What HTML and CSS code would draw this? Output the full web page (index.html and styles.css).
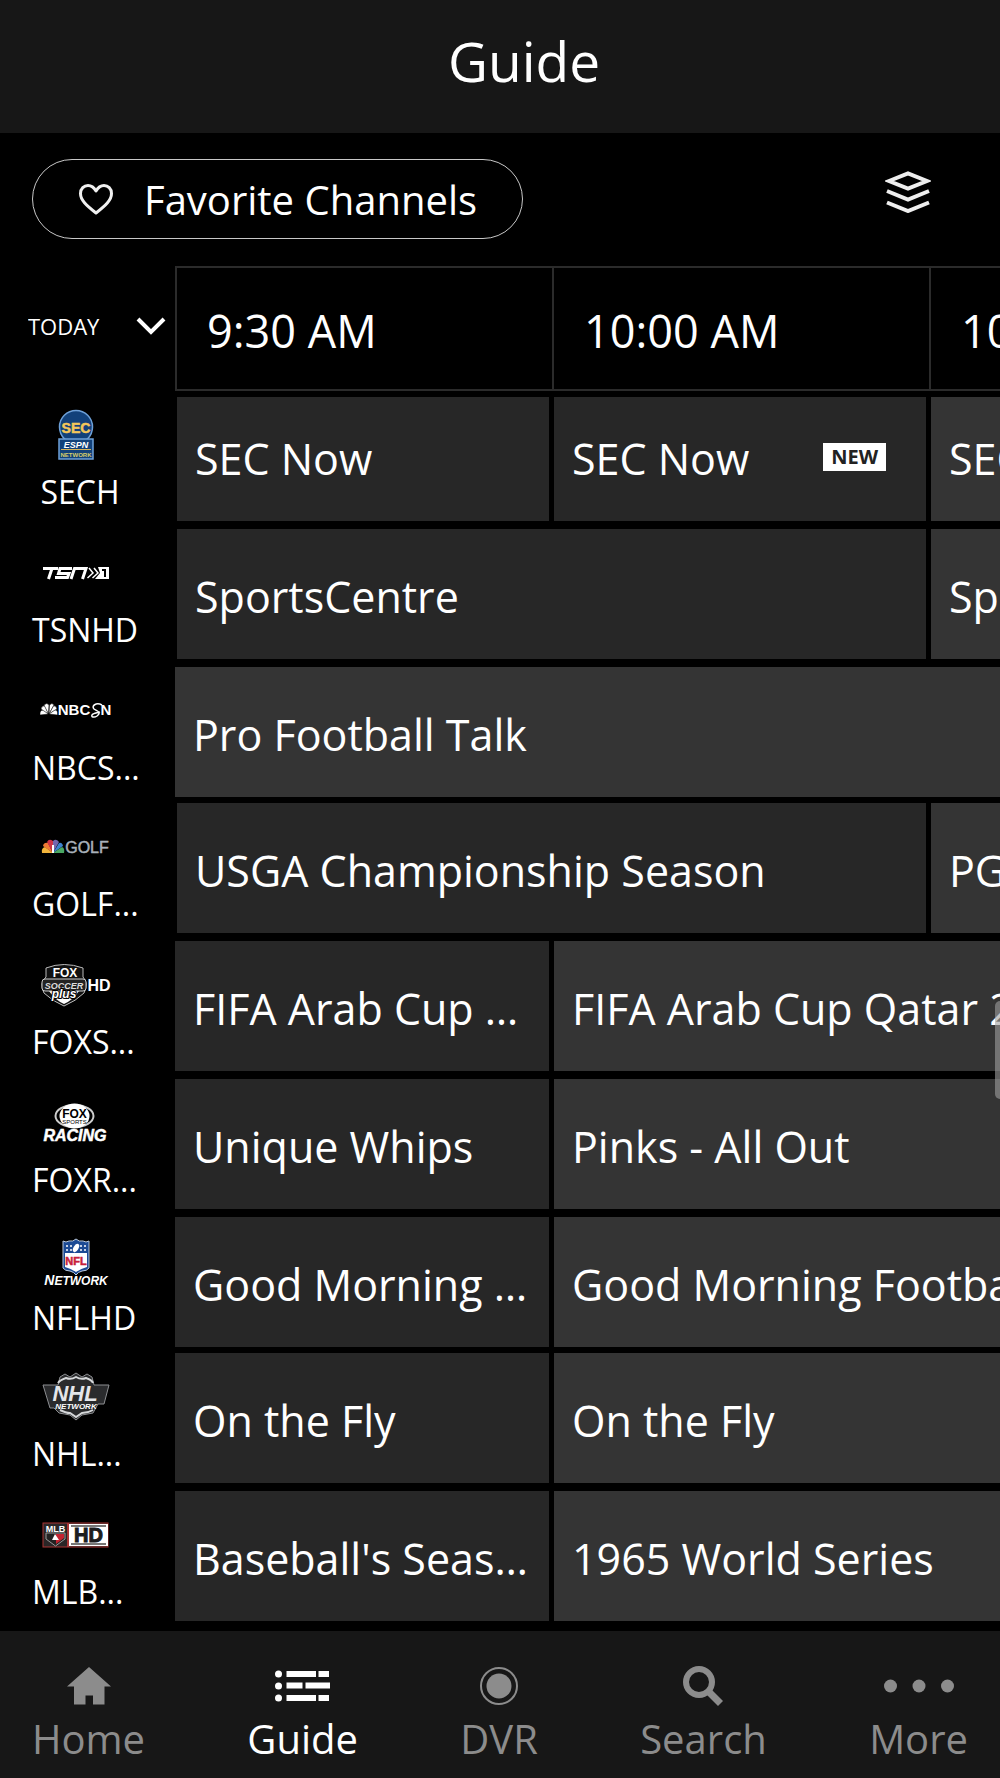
FILE: index.html
```html
<!DOCTYPE html>
<html lang="en">
  <head>
    <meta charset="UTF-8" />
    <meta name="viewport" content="width=device-width, initial-scale=1.0" />
    <title>Guide</title>
    <link rel="stylesheet" href="styles.css">
  </head>
  <body>
    <header class="header">
      <h1>Guide</h1>
    </header>

    <main>
      <div class="toolbar">
        <button class="filter-button" type="button">
          <svg width="36" height="34" viewBox="0 0 36 34" fill="none" stroke="#f0f0f0" stroke-width="3" stroke-linejoin="round">
            <path d="M18 31 C8 23 2.500 18 2.500 11.500 C2.500 6.500 6 3.500 10 3.500 C14 3.500 16 5.500 18 9 C20 5.500 22 3.500 26 3.500 C30 3.500 33.500 6.500 33.500 11.500 C33.500 18 28 23 18 31 Z" />
          </svg>
          Favorite Channels
        </button>
        <button class="layers-button" type="button" aria-label="Layers">
          <svg width="46" height="42" viewBox="0 0 46 42" fill="none" stroke="#eeeeee" stroke-width="4">
            <path d="M4 10 L23 2.500 L42 10 L23 17.500 Z" />
            <path d="M2 20 L23 28.500 L44 20" />
            <path d="M2 31.500 L23 40 L44 31.500" />
          </svg>
        </button>
      </div>

      <div class="guide">
        <table>
          <colgroup>
            <col class="col-channel" />
            <col class="col-slot" span="3" />
          </colgroup>
          <thead>
            <tr>
              <th class="day">
                <label class="day-picker">
                  <select aria-label="Day">
                    <option>TODAY</option>
                  </select>
                  <svg width="30" height="20" viewBox="0 0 30 20" fill="none" stroke="#ffffff" stroke-width="4">
                    <path d="M2 3 L15 16 L28 3" />
                  </svg>
                </label>
              </th>
              <th class="time" scope="col">9:30 AM</th>
              <th class="time" scope="col">10:00 AM</th>
              <th class="time" scope="col">10:30 AM</th>
            </tr>
          </thead>
          <tbody>
            <tr class="first">
              <th class="channel centered" scope="row">
                <svg class="logo" viewBox="0 0 72 52">
                  <circle cx="36" cy="18" r="16.500" fill="#12417a" stroke="#6da0d8" stroke-width="1.500" />
                  <rect x="19" y="30" width="34" height="20" fill="#12417a" stroke="#6da0d8" stroke-width="1.500" />
                  <text x="36" y="24" font-size="14" fill="#f3c75a" stroke="#f3c75a" stroke-width="0.500" class="logo-bold">SEC</text>
                  <text x="36" y="38.500" font-size="9" fill="#ffffff" class="logo-italic">ESPN</text>
                  <path d="M21 40.500 H51" stroke="#d6b35a" />
                  <text x="36" y="48" font-size="6" fill="#d8cf6a" class="logo-bold">NETWORK</text>
                </svg>
                <span>SECH</span>
              </th>
              <td><a class="program" href="#">SEC Now</a></td>
              <td><a class="program" href="#">SEC Now <span class="badge">NEW</span></a></td>
              <td><a class="program later" href="#">SEC Now</a></td>
            </tr>
            <tr>
              <th class="channel" scope="row">
                <svg class="logo" viewBox="0 0 72 52" fill="none" stroke="#ffffff" stroke-width="3">
                  <path d="M3 21.500 H18 M12 21.500 L8.500 32" />
                  <path d="M32 21.500 H20 L18.500 26.500 H29 L27.500 30.500 H15" />
                  <path d="M31 32 L34.500 21.500 H46 L42.500 32" />
                  <path d="M49 21 L53 26 L47.500 31 M54 21 L58 26 L52.500 31" stroke-width="1.500" />
                  <path d="M58 20 H69 V32 H55 L60 26 Z" fill="#ffffff" stroke="none" />
                  <path d="M62 23 H65 V30" stroke="#000000" stroke-width="2" />
                </svg>
                <span>TSNHD</span>
              </th>
              <td colspan="2"><a class="program" href="#">SportsCentre</a></td>
              <td><a class="program later" href="#">SportsCentre</a></td>
            </tr>
            <tr>
              <th class="channel" scope="row">
                <svg class="logo" viewBox="0 0 72 52" fill="#ffffff">
                  <g stroke="#000000" stroke-width="0.500">
                    <path d="M8.500 29 L0 30 Q-.5 25 3.500 25 Z" />
                    <path d="M8.500 29 L1 24 Q2 20 5 21 Z" />
                    <path d="M8.500 29 L4 20 Q7 17 9 20 Z" />
                    <path d="M9 29 L9.500 20 Q12 17 14 20 Z" />
                    <path d="M9 29 L13.500 21 Q16 20 17 24 Z" />
                    <path d="M9 29 L15 25 Q18 25 17.500 30 Z" />
                  </g>
                  <text x="34" y="29.500" font-size="15" class="logo-bold">NBC</text>
                  <text x="66" y="29.500" font-size="15" class="logo-bold">N</text>
                  <path d="M62 20 C56 17 51 21 54 24 C57 26 62 27 57 31 C54 33 51 32 52 30 C53 28 57 28 60 27" fill="none" stroke="#ffffff" stroke-width="1.500" />
                </svg>
                <span>NBCS...</span>
              </th>
              <td class="started" colspan="3"><a class="program later" href="#">Pro Football Talk</a></td>
            </tr>
            <tr class="tight">
              <th class="channel" scope="row">
                <svg class="logo" viewBox="0 0 72 52">
                  <path d="M13 32 L2 32 Q1 27 5 26 Z" fill="#f2b53c" />
                  <path d="M13 32 L3 25 Q4 21 8 22 Z" fill="#ef7a35" />
                  <path d="M13 32 L7 21 Q9 17 13 20 Z" fill="#cf3447" />
                  <path d="M13 32 L13 20 Q16 17 19 21 Z" fill="#7465ad" />
                  <path d="M13 32 L19 22 Q22 21 23 25 Z" fill="#3d83cf" />
                  <path d="M13 32 L22 26 Q25 27 24 32 Z" fill="#4aa764" />
                  <path d="M12 32 L12 24 L14 24 L14 32 Z" fill="#ffffff" />
                  <text x="47" y="31.500" font-size="16" fill="#a9b1ba" stroke="#a9b1ba" stroke-width="0.500" class="logo-text">GOLF</text>
                </svg>
                <span>GOLF...</span>
              </th>
              <td colspan="2"><a class="program" href="#">USGA Championship Season</a></td>
              <td><a class="program later" href="#">PGA Tour</a></td>
            </tr>
            <tr>
              <th class="channel" scope="row">
                <svg class="logo" viewBox="0 0 72 52">
                  <path d="M6 9 Q24 2 43 9 V18 Q49 24 44 34 Q36 42 24 47 Q12 42 4 34 Q-1 24 6 18 Z" fill="#111111" stroke="#bbbbbb" />
                  <path d="M9 32 H39 Q33 41 24 45 Q15 41 9 32 Z" fill="#ffffff" />
                  <rect x="2" y="20" width="44" height="12" rx="3" fill="#222222" stroke="#cccccc" />
                  <text x="25" y="18" font-size="12" fill="#ffffff" class="logo-bold">FOX</text>
                  <text x="24" y="29.500" font-size="9" fill="#dddddd" class="logo-italic">SOCCER</text>
                  <text x="24" y="39" font-size="12" fill="#ffffff" stroke="#000000" stroke-width="2" paint-order="stroke" class="logo-italic">plus</text>
                  <text x="59" y="32" font-size="16" fill="#ffffff" class="logo-bold">HD</text>
                </svg>
                <span>FOXS...</span>
              </th>
              <td class="started"><a class="program" href="#">FIFA Arab Cup Qatar 2021</a></td>
              <td colspan="2"><a class="program later" href="#">FIFA Arab Cup Qatar 2021</a></td>
            </tr>
            <tr>
              <th class="channel" scope="row">
                <svg class="logo" viewBox="0 0 72 52">
                  <ellipse cx="34.500" cy="19" rx="19" ry="11" fill="none" stroke="#cccccc" stroke-width="2" />
                  <ellipse cx="34.500" cy="19" rx="15" ry="12.500" fill="#ffffff" />
                  <text x="34.500" y="21" font-size="12" fill="#000000" class="logo-bold">FOX</text>
                  <text x="34.500" y="27" font-size="6" fill="#000000" class="logo-text">SPORTS</text>
                  <text x="35" y="44" font-size="16" fill="#ffffff" stroke="#ffffff" stroke-width="0.500" class="logo-italic">RACING</text>
                </svg>
                <span>FOXR...</span>
              </th>
              <td class="started"><a class="program" href="#">Unique Whips</a></td>
              <td colspan="2"><a class="program later" href="#">Pinks - All Out</a></td>
            </tr>
            <tr>
              <th class="channel" scope="row">
                <svg class="logo" viewBox="0 0 72 52">
                  <path d="M23 6 Q26 8 29 6 Q33 7 36 4 Q39 7 43 6 Q46 8 49 6 V33 Q47 36 42 36 Q38 37 36 40 Q34 37 30 36 Q25 36 23 33 Z" fill="#1c4a94" stroke="#b8c8dd" />
                  <path d="M25 18 H47 V32 Q40 34 36 37 Q32 34 25 32 Z" fill="#ffffff" />
                  <g fill="#ffffff">
                    <circle cx="27" cy="11" r="1" /><circle cx="31" cy="11" r="1" />
                    <circle cx="27" cy="15" r="1" /><circle cx="31" cy="15" r="1" />
                    <circle cx="41" cy="11" r="1" /><circle cx="45" cy="11" r="1" />
                    <circle cx="41" cy="15" r="1" /><circle cx="45" cy="15" r="1" />
                  </g>
                  <ellipse cx="36" cy="13" rx="2.500" ry="4.500" fill="#ffffff" transform="rotate(30 36 13)" />
                  <text x="36" y="30" font-size="11" fill="#c8203a" stroke="#c8203a" stroke-width="0.500" class="logo-bold">NFL</text>
                  <text x="36" y="50" font-size="14" fill="#ffffff" class="logo-italic">N<tspan font-size="12">ETWORK</tspan></text>
                </svg>
                <span>NFLHD</span>
              </th>
              <td class="started"><a class="program" href="#">Good Morning Football</a></td>
              <td colspan="2"><a class="program later" href="#">Good Morning Football</a></td>
            </tr>
            <tr class="tight">
              <th class="channel" scope="row">
                <svg class="logo" viewBox="0 0 72 52">
                  <path d="M20 6 L25 3 L30 6 L36 2 L42 6 L47 3 L52 6 L54 14 H69 L64 33 H58 L53 42 L42 44 L36 49 L30 44 L19 42 L14 37 H10 L3 14 H18 Z" fill="#2a2b2d" stroke="#8d8f92" />
                  <path d="M18 12 Q20 9 26 7 Q31 9 36 6 Q41 9 46 7 Q52 9 53 12" fill="none" stroke="#d5d7d9" stroke-width="2" />
                  <path d="M20 39 Q26 42 30 42 L36 46 L42 42 Q48 42 53 39" fill="none" stroke="#d5d7d9" stroke-width="2" />
                  <text x="35" y="30" font-size="22" fill="#e4e6ea" class="logo-italic">NHL</text>
                  <text x="36" y="38" font-size="8" fill="#ffffff" class="logo-italic">NETWORK</text>
                </svg>
                <span>NHL...</span>
              </th>
              <td class="started"><a class="program" href="#">On the Fly</a></td>
              <td colspan="2"><a class="program later" href="#">On the Fly</a></td>
            </tr>
            <tr>
              <th class="channel" scope="row">
                <svg class="logo" viewBox="0 0 72 52">
                  <rect x="3" y="14" width="65" height="24" fill="#2a2627" stroke="#a93434" />
                  <rect x="29" y="15" width="39" height="22" fill="#ffffff" />
                  <path d="M28 14 V38" stroke="#a93434" stroke-width="2" />
                  <path d="M31 17 H66 M31 35 H66" stroke="#777777" stroke-width="2" />
                  <path d="M6 24 H25 V30 L15.500 37 L6 30 Z" fill="#222222" stroke="#999999" />
                  <path d="M16 25 H24 V29 L16 35 Z" fill="#c42230" />
                  <path d="M12 31 L15 25 L19 31 Z" fill="#ffffff" />
                  <text x="15.500" y="23" font-size="9" fill="#ffffff" class="logo-bold">MLB</text>
                  <text x="48.500" y="33" font-size="20" fill="#1d1d1f" stroke="#1d1d1f" class="logo-bold">HD</text>
                </svg>
                <span>MLB...</span>
              </th>
              <td class="started"><a class="program" href="#">Baseball's Seasons</a></td>
              <td colspan="2"><a class="program later" href="#">1965 World Series</a></td>
            </tr>
          </tbody>
        </table>
      </div>
    </main>

    <div class="scroll-thumb"></div>

    <nav class="tabs">
      <a href="#">
        <svg width="44" height="42" viewBox="0 0 44 42" fill="currentColor">
          <path d="M22 2 L44 21.500 H37.500 V39.500 H26 V30.500 H18.500 V39.500 H7 V21.500 H0 Z" />
        </svg>
        Home
      </a>
      <a href="#" class="active">
        <svg width="55" height="42" viewBox="0 0 55 42" fill="currentColor">
          <circle cx="3.500" cy="9" r="3.500" />
          <circle cx="3.500" cy="21" r="3.500" />
          <circle cx="3.500" cy="33" r="3.500" />
          <path d="M11.500 6 H41 V12 H11.500 Z M43.500 6 H54 V12 H43.500 Z" />
          <path d="M11.500 17.500 H27.500 V23.500 H11.500 Z M30.500 17.500 H55 V23.500 H30.500 Z" />
          <path d="M11.500 30 H41 V36 H11.500 Z M43.500 30 H54 V36 H43.500 Z" />
        </svg>
        Guide
      </a>
      <a href="#">
        <svg width="42" height="42" viewBox="0 0 42 42" fill="currentColor">
          <circle cx="21" cy="21" r="18" fill="none" stroke="currentColor" stroke-width="2" />
          <circle cx="21" cy="21" r="12.500" />
        </svg>
        DVR
      </a>
      <a href="#">
        <svg width="42" height="42" viewBox="0 0 42 42" fill="none" stroke="currentColor">
          <circle cx="17" cy="17" r="13" stroke-width="6" />
          <path d="M26 26 L38.500 38.500" stroke-width="7" />
        </svg>
        Search
      </a>
      <a href="#">
        <svg width="70" height="42" viewBox="0 0 70 42" fill="currentColor">
          <circle cx="6.500" cy="21" r="6.500" />
          <circle cx="35" cy="21" r="6.500" />
          <circle cx="63.500" cy="21" r="6.500" />
        </svg>
        More
      </a>
    </nav>
  </body>
</html>
```
FILE: styles.css
```css
* {
  box-sizing: border-box;
}

body {
  margin: 0;
  background-color: #000000;
  color: #ffffff;
  font-family: "Open Sans", "Noto Sans", sans-serif;
  overflow-x: hidden;
}

button,
select {
  font-family: inherit;
  color: inherit;
  background: none;
  border: none;
  padding: 0;
}

a {
  color: inherit;
  text-decoration: none;
}

.header {
  height: 133px;
  padding: 0 0 12px 48px;
  background-color: #171717;
  display: flex;
  align-items: center;
  justify-content: center;
}

.header h1 {
  margin: 0;
  font-size: 55px;
  font-weight: 400;
}

/* Filter pill and layers icon */
.toolbar {
  height: 133px;
  padding: 26px 69px 0 32px;
  display: flex;
  justify-content: space-between;
  align-items: flex-start;
}

.filter-button {
  height: 80px;
  padding: 0 45px;
  border: 1px solid #c8c8c8;
  border-radius: 40px;
  display: flex;
  align-items: center;
  gap: 30px;
  font-size: 40px;
}

.layers-button {
  margin-top: 12px;
}

.layers-button svg {
  display: block;
}

/* Program grid */
.guide {
  overflow: hidden;
}

table {
  width: 1306px;
  min-width: 100%;
  table-layout: fixed;
  border-collapse: separate;
  border-spacing: 0;
}

.col-channel {
  width: 175px;
}

th,
td {
  padding: 0;
  font-weight: 400;
  text-align: left;
}

thead tr {
  height: 125px;
}

.day {
  vertical-align: top;
}

.day-picker {
  display: flex;
  align-items: center;
  padding: 44px 9px 0 28px;
  justify-content: space-between;
}

.day-picker select {
  appearance: none;
  font-size: 22px;
  line-height: 32px;
}

.time {
  height: 125px;
  padding: 4px 0 0 30px;
  border: 2px solid #2b2b2b;
  border-right: none;
  font-size: 45px;
}

tbody tr {
  height: 138px;
}

tbody .first {
  height: 130px;
}

tbody .tight {
  height: 136px;
}

td {
  padding: 8px 3px 0 2px;
  vertical-align: bottom;
}

.started {
  padding-left: 0;
}

.program {
  height: 130px;
  padding: 6px 18px 0;
  background-color: #272727;
  display: block;
  font-size: 43px;
  line-height: 124px;
  white-space: nowrap;
  overflow: hidden;
  text-overflow: ellipsis;
}

.later {
  background-color: #343434;
}

.first td {
  padding-top: 6px;
}

.first .program {
  height: 124px;
  padding-top: 0;
}

.tight td {
  padding-top: 6px;
}

.badge {
  float: right;
  margin: 46px 22px 0 0;
  padding: 0 8px;
  background-color: #ffffff;
  color: #222222;
  font-size: 20px;
  font-weight: 700;
  line-height: 28px;
}

.channel {
  vertical-align: bottom;
  padding: 0 0 7px 32px;
  font-size: 32px;
  line-height: 44px;
}

.channel span {
  display: block;
}

.centered span {
  width: 96px;
  text-align: center;
}

.logo {
  display: block;
  width: 72px;
  height: 52px;
  margin: 0 0 9px 8px;
}

.logo text {
  text-anchor: middle;
}

.logo-text {
  font-family: "Liberation Sans", sans-serif;
}

.logo-bold {
  font-family: "Liberation Sans", sans-serif;
  font-weight: 700;
}

.logo-italic {
  font-family: "Liberation Sans", sans-serif;
  font-weight: 700;
  font-style: italic;
}

.scroll-thumb {
  position: absolute;
  top: 1001px;
  right: 0;
  width: 5px;
  height: 98px;
  border-radius: 5px 0 0 5px;
  background-color: rgba(160, 160, 160, 0.6);
}

/* Bottom navigation */
.tabs {
  margin-top: 10px;
  height: 147px;
  padding: 34px 32px 0;
  background-color: #171717;
  display: flex;
  justify-content: space-between;
  align-items: flex-start;
  color: #8c8c8c;
  font-size: 40px;
  line-height: 64px;
}

.tabs a {
  display: flex;
  flex-direction: column;
  align-items: center;
}

.tabs .active {
  color: #ffffff;
}
```
